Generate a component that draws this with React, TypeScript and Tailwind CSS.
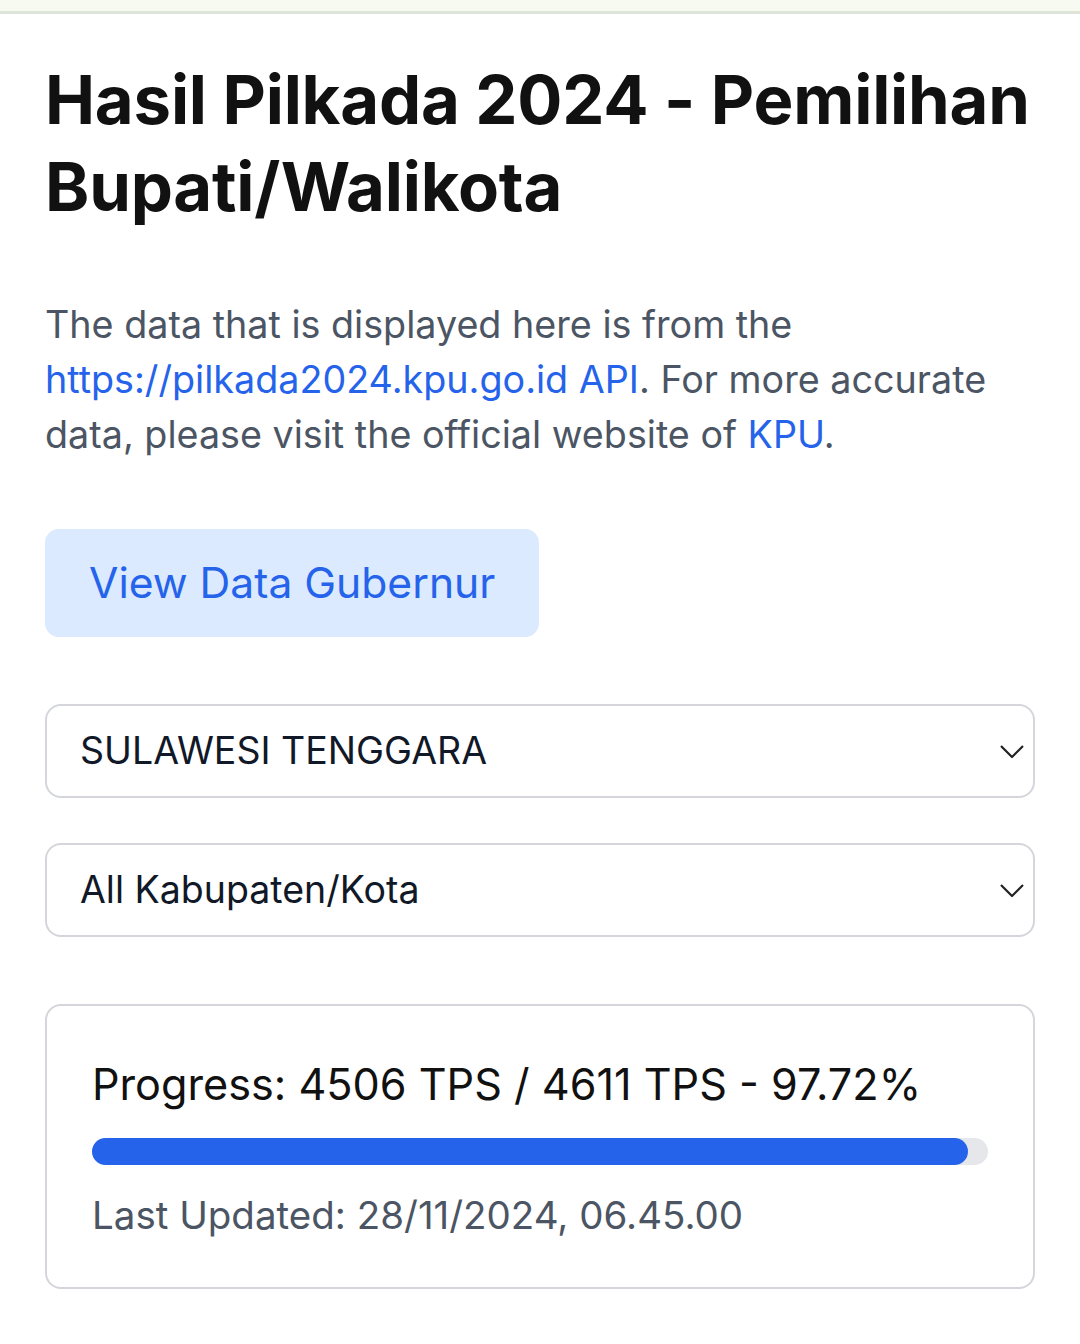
const PROGRESS = { done: 4506, total: 4611 };

function Select({ value }: { value: string }) {
  return (
    <div className="flex h-[94px] items-center rounded-[16px] border-2 border-[#d4d6db] bg-white pl-[33px] pr-[8px]">
      <span className="flex-1 text-[37.5px] text-[#111827]">{value}</span>
      <svg width="26" height="16" viewBox="0 0 26 16" fill="none" className="text-[#222]">
        <polyline points="2,3 13,14 24,3" stroke="currentColor" strokeWidth="2.2" strokeLinejoin="round" />
      </svg>
    </div>
  );
}

export default function App() {
  const pct = (PROGRESS.done / PROGRESS.total) * 100;
  return (
    <div className="min-h-[1344px] bg-white font-['Inter',sans-serif]">
      <div className="h-[14px] border-b-[3px] border-[#dfe4d8] bg-[#f7faf0]" />
      <main className="px-[45px] pt-[42px]">
        <h1 className="text-[67px] font-bold leading-[87px] tracking-[-0.2px] text-[#111]">
          Hasil Pilkada 2024 - Pemilihan Bupati/Walikota
        </h1>
        <p className="mt-[67px] text-[37.7px] leading-[55px] text-[#4b5563]">
          The data that is displayed here is from the{" "}
          <a className="text-[#2563eb]">https://pilkada2024.kpu.go.id API</a>. For more accurate data, please visit the
          official website of <a className="text-[#2563eb]">KPU</a>.
        </p>
        <button className="mt-[67px] h-[108px] rounded-[14px] bg-[#dbeafe] px-[44px] text-[42.6px] text-[#2563eb]">
          View Data Gubernur
        </button>
        <div className="mt-[67px] flex flex-col gap-[45px]">
          <Select value="SULAWESI TENGGARA" />
          <Select value="All Kabupaten/Kota" />
        </div>
        <section className="mt-[67px] rounded-[16px] border-2 border-[#d4d6db] px-[45px] pt-[50px] pb-[46px]">
          <p className="text-[43.2px] leading-[56px] text-[#111]">
            Progress: {PROGRESS.done} TPS / {PROGRESS.total} TPS - {pct.toFixed(2)}%
          </p>
          <div className="mt-[26px] h-[27px] w-full rounded-full bg-[#e5e7eb]">
            <div className="h-full rounded-full bg-[#2563eb]" style={{ width: `${pct}%` }} />
          </div>
          <p className="mt-[24px] text-[38.5px] leading-[52px] text-[#4b5563]">Last Updated: 28/11/2024, 06.45.00</p>
        </section>
      </main>
    </div>
  );
}
